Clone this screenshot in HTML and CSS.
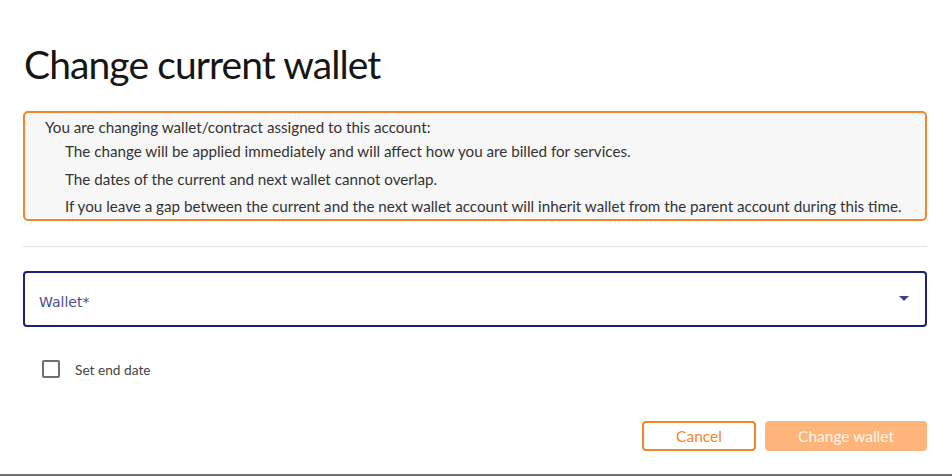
FILE: index.html
```html
<!DOCTYPE html>
<html>
<head>
<meta charset="utf-8">
<link rel="stylesheet" href="styles.css">
</head>
<body>
<div class="dialog">
  <h1 class="title">Change current wallet</h1>
  <div class="alert">
    <div class="alert-head">You are changing wallet/contract assigned to this account:</div>
    <ul class="alert-list">
      <li>The change will be applied immediately and will affect how you are billed for services.</li>
      <li>The dates of the current and next wallet cannot overlap.</li>
      <li>If you leave a gap between the current and the next wallet account will inherit wallet from the parent account during this time.</li>
    </ul>
  </div>
  <hr class="divider">
  <div class="select">
    <span class="select-label">Wallet*</span>
    <svg class="select-arrow" width="10" height="5" viewBox="0 0 10 5"><path d="M0 0 L10 0 L5 5 Z" fill="#3b3f8c"/></svg>
  </div>
  <label class="check-row">
    <span class="checkbox"></span>
    <span class="check-label">Set end date</span>
  </label>
  <div class="actions">
    <button class="btn btn-cancel">Cancel</button>
    <button class="btn btn-primary">Change wallet</button>
  </div>
</div>
<div class="backdrop"></div>
</body>
</html>
```
FILE: styles.css
```css
html, body {
  margin: 0;
  padding: 0;
  background: #6d6d6d;
}
body {
  width: 952px;
  height: 476px;
  overflow: hidden;
  font-family: "Lato", "Open Sans", sans-serif;
  color: #2b2b2b;
}
.dialog {
  box-sizing: border-box;
  width: 952px;
  height: 474px;
  background: #ffffff;
  padding: 0 25px 0 23px;
  display: flex;
  flex-direction: column;
}
.title {
  margin: 0;
  height: 111px;
  box-sizing: border-box;
  padding: 40px 0 0 1px;
  font-weight: 400;
  font-size: 39px;
  line-height: 48px;
  color: #161616;
  letter-spacing: -0.9px;
}
.alert {
  box-sizing: border-box;
  height: 110px;
  border: 2px solid #f5842b;
  border-radius: 5px;
  background: #f7f7f7;
  padding: 4px 0 0 20px;
  font-size: 15.2px;
  color: #333333;
}
.alert-head {
  line-height: 20px;
}
.alert-list {
  list-style: none;
  margin: 0;
  padding: 1px 0 0 20px;
}
.alert-list li {
  line-height: 27.5px;
}
.divider {
  margin: 25px 0 0 0;
  border: 0;
  border-top: 1px solid #e2e2e2;
  height: 0;
}
.select {
  margin-top: 24px;
  box-sizing: border-box;
  height: 56px;
  border: 2px solid #1c2178;
  border-radius: 4px;
  display: flex;
  align-items: center;
  justify-content: space-between;
  padding: 6px 16px 0 14px;
}
.select-label {
  font-family: "DejaVu Sans", sans-serif;
  font-size: 14px;
  color: #474c95;
}
.select-arrow {
  margin-top: -8px;
}
.check-row {
  margin-top: 33px;
  display: flex;
  align-items: center;
  padding-left: 19px;
  height: 18px;
}
.checkbox {
  box-sizing: border-box;
  width: 18px;
  height: 18px;
  border: 2px solid #6f6f6f;
  border-radius: 2px;
}
.check-label {
  margin-left: 15px;
  font-size: 13.7px;
  color: #444444;
}
.actions {
  margin-top: 43px;
  display: flex;
  justify-content: flex-end;
  gap: 9px;
}
.btn {
  box-sizing: border-box;
  height: 30px;
  border-radius: 4px;
  font-family: "Lato", "Open Sans", sans-serif;
  font-size: 15.5px;
  padding: 0;
}
.btn-cancel {
  width: 114px;
  background: #ffffff;
  border: 2px solid #f5842b;
  color: #f5842b;
}
.btn-primary {
  width: 162px;
  background: #feb47a;
  border: 0;
  color: #fff4ea;
}
.backdrop {
  height: 2px;
  background: #707070;
}
```
